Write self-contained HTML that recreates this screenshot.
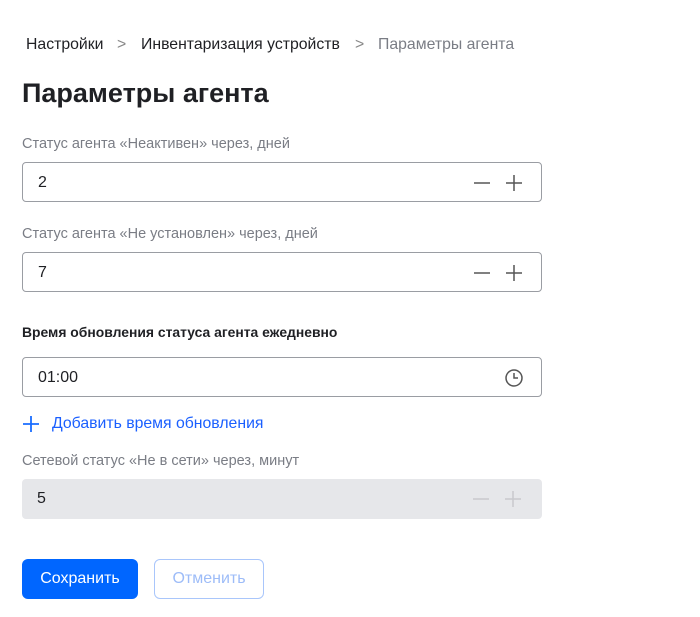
<!DOCTYPE html>
<html><head><meta charset="utf-8"><style>
body{margin:0;width:700px;height:617px;background:#fff;font-family:"Liberation Sans",sans-serif;position:relative;overflow:hidden}
.a{position:absolute;white-space:nowrap}
.bc{top:36px;font-size:15.8px;color:#1f2024}
.lbl{font-size:14.5px;color:#7a7d85;left:22px}
.inp{position:absolute;left:22px;border:1px solid #9a9da3;border-radius:4px;box-sizing:border-box;width:520px;height:40px}
.inp span{position:absolute;left:15px;top:11px;font-size:16px;color:#1f2024}
.inp svg{position:absolute;top:11px}
</style></head><body>
<div class="a bc" style="left:26px">Настройки</div>
<div class="a bc" style="left:117px;color:#888">&gt;</div>
<div class="a bc" style="left:141px">Инвентаризация устройств</div>
<div class="a bc" style="left:355px;color:#888">&gt;</div>
<div class="a bc" style="left:378px;color:#7a7d85">Параметры агента</div>
<div class="a" style="left:22px;top:78px;font-size:27px;font-weight:bold;color:#1f2024">Параметры агента</div>

<div class="a lbl" style="top:136px">Статус агента «Неактивен» через, дней</div>
<div class="inp" style="top:162px"><span>2</span>
<svg style="left:450px" width="18" height="18"><path d="M1 9h16" stroke="#555" stroke-width="1.5"/></svg>
<svg style="left:482px" width="18" height="18"><path d="M1 9h16M9 1v16" stroke="#555" stroke-width="1.5"/></svg></div>

<div class="a lbl" style="top:226px">Статус агента «Не установлен» через, дней</div>
<div class="inp" style="top:252px"><span>7</span>
<svg style="left:450px" width="18" height="18"><path d="M1 9h16" stroke="#555" stroke-width="1.5"/></svg>
<svg style="left:482px" width="18" height="18"><path d="M1 9h16M9 1v16" stroke="#555" stroke-width="1.5"/></svg></div>

<div class="a" style="left:22px;top:324px;font-size:13.9px;font-weight:bold;color:#1f2024">Время обновления статуса агента ежедневно</div>
<div class="inp" style="top:357px"><span>01:00</span>
<svg style="left:481px;top:10px" width="20" height="20"><circle cx="10" cy="10" r="8" fill="none" stroke="#555" stroke-width="1.5"/><path d="M10 5v5h4" fill="none" stroke="#555" stroke-width="1.5"/></svg></div>

<svg class="a" style="left:22px;top:415px" width="18" height="18"><path d="M1 9h16M9 1v16" stroke="#1a6dff" stroke-width="1.8"/></svg>
<div class="a" style="left:52px;top:415px;font-size:15.8px;color:#1a5fff">Добавить время обновления</div>

<div class="a lbl" style="top:453px">Сетевой статус «Не в сети» через, минут</div>
<div class="inp" style="top:479px;background:#e6e7ea;border:none"><span style="top:11px">5</span>
<svg style="left:450px;top:11px" width="18" height="18"><path d="M1 9h16" stroke="#c8c9cd" stroke-width="1.5"/></svg>
<svg style="left:482px;top:11px" width="18" height="18"><path d="M1 9h16M9 1v16" stroke="#c8c9cd" stroke-width="1.5"/></svg></div>

<div class="a" style="left:22px;top:559px;width:116px;height:40px;background:#0066ff;border-radius:6px;color:#fff;font-size:16px;text-align:center;line-height:40px">Сохранить</div>
<div class="a" style="left:154px;top:559px;width:110px;height:40px;box-sizing:border-box;border:1px solid #a9c6fb;border-radius:6px;color:#9dbcf8;font-size:16px;text-align:center;line-height:38px">Отменить</div>
</body></html>
